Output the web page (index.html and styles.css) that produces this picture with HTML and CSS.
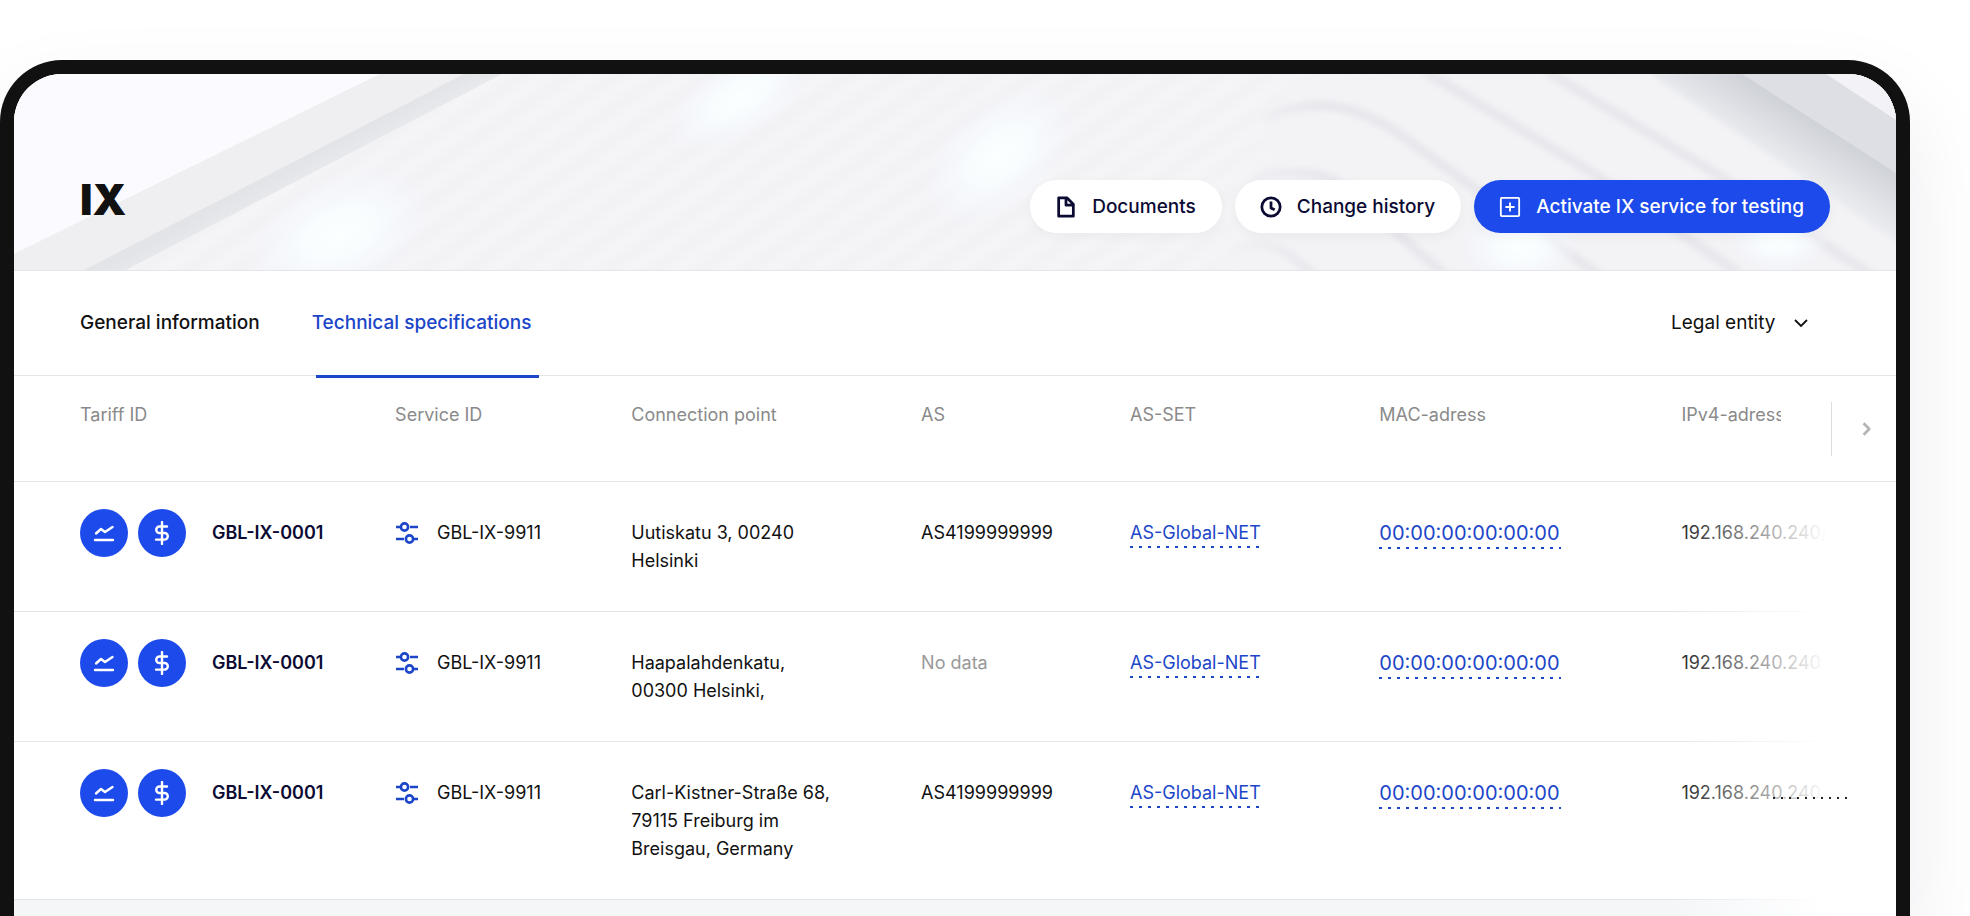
FILE: index.html
```html
<!DOCTYPE html>
<html lang="en">
<head>
    <meta charset="UTF-8">
    <meta name="viewport" content="width=device-width, initial-scale=1.0">
    <title>IX - Technical specifications</title>
    <link rel="stylesheet" href="styles.css">
</head>
<body>
    <!-- Shared icons -->
    <svg class="sprite" aria-hidden="true">
        <symbol id="icon-chart" viewBox="0 0 24 24">
            <path d="M4 12.500l5-4.500 4 3 7.500-5M3 19h18"/>
        </symbol>
        <symbol id="icon-dollar" viewBox="0 0 24 24">
            <path d="M12 1v22M17 5.500H9.500a3.200 3.200 0 0 0 0 6.500h5a3.300 3.300 0 0 1 0 6.600H6"/>
        </symbol>
        <symbol id="icon-sliders" viewBox="0 0 24 24">
            <circle cx="9.500" cy="6" r="3.600"/>
            <circle cx="14.500" cy="18" r="3.600"/>
            <path d="M1 6h5M15 6h8M1 18h8M18 18h5"/>
        </symbol>
    </svg>

    <div class="device">
        <header class="header">
            <svg class="header-bg" viewBox="0 0 1882 196" preserveAspectRatio="xMaxYMid slice" aria-hidden="true">
                <defs>
                    <linearGradient id="rib" x1="0" y1="0" x2="0" y2="1">
                        <stop offset="0" stop-color="#f2f2f5"/>
                        <stop offset="0.5" stop-color="#f5f5f8"/>
                        <stop offset="1" stop-color="#f2f2f5"/>
                    </linearGradient>
                    <pattern id="ribs" width="26" height="26" patternUnits="userSpaceOnUse" patternTransform="rotate(-34)">
                        <rect width="27" height="26" fill="url(#rib)"/>
                    </pattern>
                    <linearGradient id="edge" gradientUnits="userSpaceOnUse" x1="450" y1="0" x2="464" y2="26">
                        <stop offset="0" stop-color="#e2e4e7"/>
                        <stop offset="0.6" stop-color="#e8e9ec"/>
                        <stop offset="1" stop-color="#f2f2f5"/>
                    </linearGradient>
                    <linearGradient id="shade" gradientUnits="userSpaceOnUse" x1="1630" y1="0" x2="1657" y2="-43">
                        <stop offset="0" stop-color="#e9eaee"/>
                        <stop offset="1" stop-color="#cfd2d8"/>
                    </linearGradient>
                    <linearGradient id="groove" gradientUnits="userSpaceOnUse" x1="1210" y1="0" x2="1310" y2="0">
                        <stop offset="0" stop-color="#e6e6eb" stop-opacity="0"/>
                        <stop offset="1" stop-color="#e6e6eb"/>
                    </linearGradient>
                    <radialGradient id="glow">
                        <stop offset="0" stop-color="#fbffff"/>
                        <stop offset="0.4" stop-color="#f8fdff" stop-opacity="0.9"/>
                        <stop offset="1" stop-color="#f5f6ff" stop-opacity="0"/>
                    </radialGradient>
                    <filter id="soft"><feGaussianBlur stdDeviation="3"/></filter>
                    <filter id="softer" x="-20%" width="140%"><feGaussianBlur stdDeviation="24"/></filter>
                </defs>
                <rect width="1882" height="196" fill="url(#ribs)"/>
                <path d="M0 0H366L0 180z" fill="#fbfafe"/>
                <path d="M366 0H450L70 196H0V180z" fill="#efeff2"/>
                <path d="M450 0H488L112 196H70z" fill="url(#edge)"/>
                <path d="M1200 230C1240 120 1250 40 1330 -40H1920V230z" fill="#f3f3f6" filter="url(#softer)"/>
                <g fill="none" stroke="url(#groove)" stroke-width="9" filter="url(#soft)">
                    <path d="M1214 178C1235 168 1255 168 1275 180L1299 200"/>
                    <path d="M1240 106C1265 96 1295 96 1319 106C1345 122 1370 150 1431 200"/>
                    <path d="M1249 46C1290 24 1330 26 1380 56L1453 109L1584 200"/>
                    <path d="M1410 -3L1579 99L1726 200"/>
                    <path d="M1532 -3L1701 99L1856 200"/>
                </g>
                <path d="M1630 -4L1890 172V-4z" fill="url(#shade)" filter="url(#soft)"/>
                <path d="M1728 0H1882V99z" fill="#dddfe4"/>
                <path d="M1812 0H1882V46z" fill="#f3f3f7"/>
                <ellipse cx="325" cy="160" rx="100" ry="60" fill="url(#glow)" transform="rotate(-25 325 160)"/>
                <ellipse cx="725" cy="24" rx="84" ry="40" fill="url(#glow)" transform="rotate(-30 725 24)"/>
                <ellipse cx="985" cy="82" rx="90" ry="54" fill="url(#glow)" transform="rotate(-40 985 82)"/>
                <ellipse cx="1505" cy="172" rx="60" ry="44" fill="url(#glow)"/>
                <ellipse cx="1765" cy="166" rx="50" ry="34" fill="url(#glow)"/>
            </svg>
            <h1>IX</h1>
            <div class="actions">
                <button type="button" class="btn">
                    <svg class="icon" viewBox="0 0 24 24"><path d="M4 2h9l7 7v13H4zM12 3v7h7"/></svg>
                    Documents
                </button>
                <button type="button" class="btn">
                    <svg class="icon" viewBox="0 0 24 24"><circle cx="12" cy="12" r="10"/><path d="M12 6v7l4 2"/></svg>
                    Change history
                </button>
                <button type="button" class="btn btn-primary">
                    <svg class="icon" viewBox="0 0 24 24"><rect x="2" y="2" width="20" height="20" rx="1"/><path d="M12 7v10M7 12h10"/></svg>
                    Activate IX service for testing
                </button>
            </div>
        </header>

        <div class="toolbar">
            <nav class="tabs">
                <a href="#general">General information</a>
                <a href="#technical" class="active">Technical specifications</a>
            </nav>
            <div class="entity">
                <select aria-label="Legal entity">
                    <option>Legal entity</option>
                </select>
                <svg class="entity-arrow" viewBox="0 0 14 14" aria-hidden="true"><path d="M1 4l6 6 6-6"/></svg>
            </div>
        </div>

        <main class="table-area">
            <table>
                <colgroup>
                    <col class="col-tariff">
                    <col class="col-service">
                    <col class="col-point">
                    <col class="col-as">
                    <col class="col-asset">
                    <col class="col-mac">
                    <col>
                </colgroup>
                <thead>
                    <tr>
                        <th>Tariff ID</th>
                        <th>Service ID</th>
                        <th>Connection point</th>
                        <th>AS</th>
                        <th>AS-SET</th>
                        <th>MAC-adress</th>
                        <th><span class="clipped">IPv4-adress</span></th>
                    </tr>
                </thead>
                <tbody>
                    <tr>
                        <td>
                            <div class="tariff">
                                <span class="badge"><svg><use href="#icon-chart"/></svg></span>
                                <span class="badge"><svg><use href="#icon-dollar"/></svg></span>
                                <strong>GBL-IX-0001</strong>
                            </div>
                        </td>
                        <td><div class="service"><svg><use href="#icon-sliders"/></svg>GBL-IX-9911</div></td>
                        <td>Uutiskatu 3, 00240<br>Helsinki</td>
                        <td>AS4199999999</td>
                        <td><a href="#as-set">AS-Global-NET</a></td>
                        <td class="mac"><a href="#mac">00:00:00:00:00:00</a></td>
                        <td>192.168.240.240/</td>
                    </tr>
                    <tr>
                        <td>
                            <div class="tariff">
                                <span class="badge"><svg><use href="#icon-chart"/></svg></span>
                                <span class="badge"><svg><use href="#icon-dollar"/></svg></span>
                                <strong>GBL-IX-0001</strong>
                            </div>
                        </td>
                        <td><div class="service"><svg><use href="#icon-sliders"/></svg>GBL-IX-9911</div></td>
                        <td>Haapalahdenkatu,<br>00300 Helsinki,</td>
                        <td class="empty">No data</td>
                        <td><a href="#as-set">AS-Global-NET</a></td>
                        <td class="mac"><a href="#mac">00:00:00:00:00:00</a></td>
                        <td>192.168.240.240</td>
                    </tr>
                    <tr>
                        <td>
                            <div class="tariff">
                                <span class="badge"><svg><use href="#icon-chart"/></svg></span>
                                <span class="badge"><svg><use href="#icon-dollar"/></svg></span>
                                <strong>GBL-IX-0001</strong>
                            </div>
                        </td>
                        <td><div class="service"><svg><use href="#icon-sliders"/></svg>GBL-IX-9911</div></td>
                        <td>Carl-Kistner-Straße 68,<br>79115 Freiburg im<br>Breisgau, Germany</td>
                        <td>AS4199999999</td>
                        <td><a href="#as-set">AS-Global-NET</a></td>
                        <td class="mac"><a href="#mac">00:00:00:00:00:00</a></td>
                        <td class="dotted">192.168.240.240</td>
                    </tr>
                </tbody>
            </table>
            <div class="rest"></div>
            <div class="fade"></div>
            <button type="button" class="scroll-next" aria-label="Next columns">
                <svg viewBox="0 0 14 14"><path d="M4 2l5 5-5 5"/></svg>
            </button>
        </main>
    </div>
</body>
</html>
```
FILE: styles.css
```css
* {
    box-sizing: border-box;
}
body {
    display: flex;
    flex-direction: column;
    margin: 0;
    height: 100vh;
    overflow: hidden;
    background-color: #fff;
    color: #111;
    font-family: Inter, "Liberation Sans", sans-serif;
    font-size: 18px;
    line-height: 28px;
}
button, select {
    font: inherit;
    color: inherit;
    border: none;
    cursor: pointer;
}
svg {
    fill: none;
    stroke: currentColor;
    stroke-width: 2;
    stroke-linejoin: round;
}
.sprite {
    display: none;
}
.device {
    flex: 1;
    display: flex;
    flex-direction: column;
    min-height: 0;
    margin: 60px 60px 0 0;
    border: 14px solid #111;
    border-bottom: none;
    border-radius: 62px 62px 0 0;
    overflow: hidden;
    background-color: #fff;
    box-shadow: 0 40px 90px rgba(20, 20, 60, 0.08);
}

/* Header */
.header {
    position: relative;
    flex: none;
    display: flex;
    justify-content: space-between;
    align-items: flex-end;
    height: 197px;
    padding: 0 66px 37px;
    border-bottom: 1px solid #e3e5e8;
}
.header-bg {
    position: absolute;
    inset: 0;
    width: 100%;
    height: 100%;
    stroke: none;
}
.header h1 {
    position: relative;
    margin: 0 0 10px;
    font-size: 43px;
    font-weight: 900;
    line-height: 48px;
}
.actions {
    position: relative;
    display: flex;
    gap: 13px;
}
.btn {
    display: flex;
    align-items: center;
    gap: 15px;
    height: 53px;
    padding: 0 26px 0 25px;
    border-radius: 27px;
    background-color: #fff;
    color: #0b0a33;
    font-size: 19px;
    font-weight: 500;
    white-space: nowrap;
    box-shadow: 0 4px 12px rgba(20, 20, 60, 0.04);
}
.btn-primary {
    background-color: #1d4aea;
    color: #fff;
}
.icon {
    width: 22px;
    height: 22px;
    stroke-width: 3;
}
.btn-primary .icon {
    stroke-width: 2;
}

/* Tabs */
.toolbar {
    flex: none;
    display: flex;
    justify-content: space-between;
    align-items: stretch;
    height: 105px;
    padding: 0 88px 0 66px;
    border-bottom: 1px solid #e3e5e8;
    font-size: 19px;
}
.tabs {
    display: flex;
    gap: 52px;
}
.tabs a {
    position: relative;
    height: 107px;
    padding-top: 38px;
    color: #111;
    font-weight: 500;
    text-decoration: none;
}
.tabs .active {
    color: #1c46c9;
}
.tabs .active::after {
    content: "";
    position: absolute;
    left: 4px;
    right: -8px;
    bottom: 0;
    height: 3px;
    background-color: #1c46c9;
}
.entity {
    position: relative;
    align-self: center;
}
.entity select {
    appearance: none;
    padding: 0 32px 0 0;
    background: none;
}
.entity-arrow {
    position: absolute;
    right: 0;
    top: 7px;
    width: 14px;
    height: 14px;
    stroke-width: 1.8;
    stroke-linejoin: miter;
    pointer-events: none;
}

/* Table */
.table-area {
    position: relative;
    flex: 1;
    display: flex;
    flex-direction: column;
    min-height: 0;
}
table {
    width: 100%;
    table-layout: fixed;
    border-collapse: separate;
    border-spacing: 0;
}
.col-tariff { width: 20.25%; }
.col-service { width: 12.55%; }
.col-point { width: 15.4%; }
.col-as { width: 11.1%; }
.col-asset { width: 13.25%; }
.col-mac { width: 16.05%; }
th, td {
    padding: 37px 0 36px;
    border-bottom: 1px solid #e3e5e8;
    text-align: left;
    vertical-align: top;
    white-space: nowrap;
}
th {
    height: 106px;
    padding: 25px 0 0;
    color: #8a8a8a;
    font-weight: 400;
}
th:first-child, td:first-child {
    padding-left: 66px;
}
td:first-child {
    padding-top: 27px;
    padding-bottom: 0;
}
td a {
    padding: 0 1px 5px 0;
    color: #1c46c9;
    text-decoration: none;
    background: repeating-linear-gradient(90deg, currentColor 0 3px, transparent 3px 9px) left bottom / 100% 2px no-repeat;
}
.mac {
    font-size: 20px;
}
.mac a {
    padding-bottom: 4px;
}
.empty {
    color: #999;
}
.clipped {
    display: block;
    width: 100px;
    overflow: hidden;
}
.tariff {
    display: flex;
    align-items: center;
    gap: 10px;
}
.tariff strong {
    margin-left: 16px;
    color: #0b0a33;
    font-weight: 600;
}
.badge {
    display: flex;
    align-items: center;
    justify-content: center;
    width: 48px;
    height: 48px;
    border-radius: 50%;
    background-color: #1d4aea;
    color: #fff;
}
.badge svg {
    width: 24px;
    height: 24px;
    stroke-width: 2.4;
    stroke-linecap: round;
}
.service {
    display: flex;
    align-items: center;
    gap: 18px;
}
.service svg {
    width: 24px;
    height: 24px;
    color: #1c46c9;
    stroke-width: 2.6;
}
.rest {
    flex: 1;
    background-color: #f4f6f8;
}
.dotted {
    position: relative;
}
.dotted::after {
    content: "";
    position: absolute;
    z-index: 1;
    left: 92px;
    top: 55px;
    width: 80px;
    height: 2px;
    background: repeating-linear-gradient(90deg, #222 0 2px, transparent 2px 8px);
}

.fade {
    position: absolute;
    top: 106px;
    right: 0;
    bottom: 0;
    width: 230px;
    background: linear-gradient(90deg, rgba(255, 255, 255, 0), #fff 70%);
}
.scroll-next {
    position: absolute;
    top: 26px;
    right: 0;
    display: flex;
    align-items: center;
    width: 65px;
    height: 54px;
    padding: 0 0 0 27px;
    border-left: 1px solid #dcdee2;
    background: none;
    color: #b5b5b5;
}
.scroll-next svg {
    width: 16px;
    height: 16px;
    stroke-width: 2.4;
}
```
